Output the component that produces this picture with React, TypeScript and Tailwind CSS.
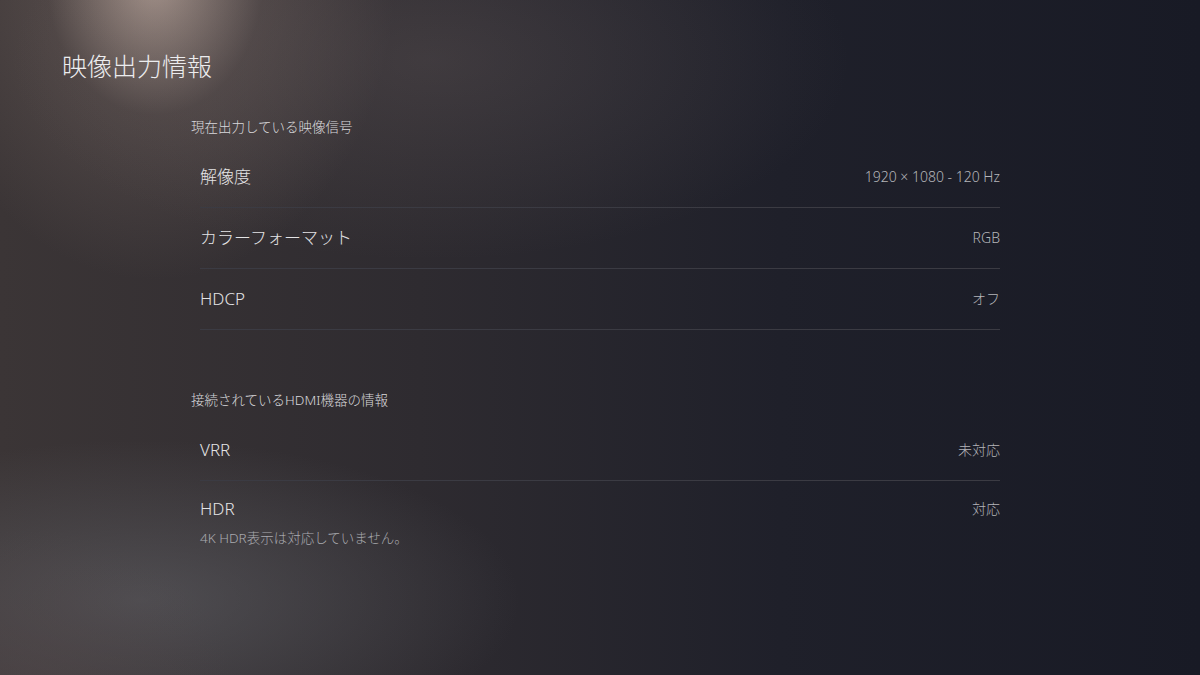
import React from "react";

type TRow = {
  label: string;
  value: string;
  note?: string;
  last?: boolean;
};

type TSection = {
  title: string;
  rows: TRow[];
};

const sections: TSection[] = [
  {
    title: "現在出力している映像信号",
    rows: [
      { label: "解像度", value: "1920 × 1080 - 120 Hz" },
      { label: "カラーフォーマット", value: "RGB" },
      { label: "HDCP", value: "オフ" },
    ],
  },
  {
    title: "接続されているHDMI機器の情報",
    rows: [
      { label: "VRR", value: "未対応" },
      {
        label: "HDR",
        value: "対応",
        note: "4K HDR表示は対応していません。",
        last: true,
      },
    ],
  },
];

const InfoRow = ({ label, value, note, last }: TRow) => {
  // 注釈付きの行は下線なし
  if (note) {
    return (
      <div className="pt-[16px]">
        <div className="flex items-center justify-between">
          <span className="text-[17px] leading-[24px] text-[#e4e4e6]">
            {label}
          </span>
          <span className="text-[14px] leading-[24px] text-[#b4b5b9]">
            {value}
          </span>
        </div>
        <p className="mt-[7px] text-[13.5px] leading-[20px] text-[#a9aaaf]">
          {note}
        </p>
      </div>
    );
  }

  return (
    <div
      className={`flex h-[61px] items-center justify-between ${
        last ? "" : "border-b border-[#3b3b43]"
      }`}
    >
      <span className="text-[17px] leading-[24px] text-[#e4e4e6]">{label}</span>
      <span className="text-[14px] leading-[24px] text-[#b4b5b9]">{value}</span>
    </div>
  );
};

const App = () => {
  return (
    <div className="relative min-h-[675px] w-full overflow-hidden bg-[#1b1c26] font-['Noto_Sans','Noto_Sans_CJK_JP',sans-serif] font-light">
      {/* 背景の光 */}
      <div className="pointer-events-none absolute inset-0 bg-[linear-gradient(90deg,#3b3536_0%,#2e2b30_35%,#1f202a_65%,#181a25_100%)]" />
      <div className="pointer-events-none absolute inset-0 bg-[radial-gradient(ellipse_240px_300px_at_155px_-20px,rgba(185,165,155,0.85),rgba(120,105,100,0.35)_45%,transparent_100%)]" />
      <div className="pointer-events-none absolute inset-0 bg-[radial-gradient(ellipse_420px_200px_at_430px_60px,rgba(120,108,108,0.25),transparent_100%)]" />
      <div className="pointer-events-none absolute inset-0 bg-[radial-gradient(ellipse_380px_160px_at_140px_600px,rgba(110,112,118,0.45),transparent_100%)]" />
      <div className="pointer-events-none absolute inset-0 bg-[radial-gradient(ellipse_200px_140px_at_30px_670px,rgba(80,70,72,0.5),transparent_100%)]" />

      <div className="relative">
        <h1 className="pl-[62px] pt-[50px] text-[25px] leading-[32px] text-[#ececee]">
          映像出力情報
        </h1>

        <div className="ml-[191px] mt-[35px] w-[809px]">
          {sections.map((section, i) => (
            <div key={section.title} className={i > 0 ? "mt-[60px]" : ""}>
              <h2 className="mb-[10px] text-[13.5px] leading-[20px] text-[#d9d9dc]">
                {section.title}
              </h2>
              <div className="pl-[9px]">
                {section.rows.map((row) => (
                  <InfoRow key={row.label} {...row} />
                ))}
              </div>
            </div>
          ))}
        </div>
      </div>
    </div>
  );
};

export default App;
